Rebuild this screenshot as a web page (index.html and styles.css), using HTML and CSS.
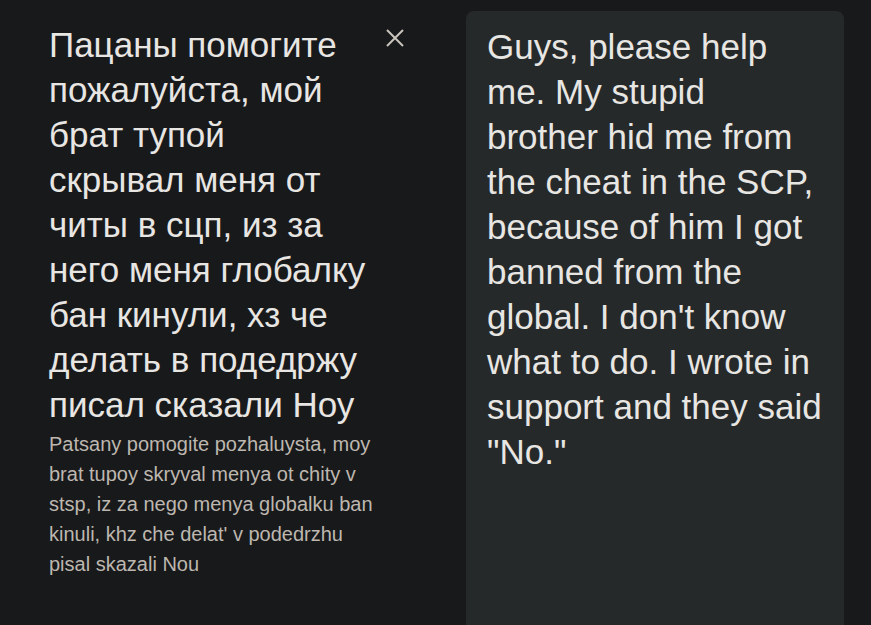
FILE: index.html
```html
<!DOCTYPE html>
<html>
<head>
<meta charset="utf-8">
<link rel="stylesheet" href="styles.css">
</head>
<body>
<div class="page">
  <div class="source">
    <div class="source-text">Пацаны помогите пожалуйста, мой брат тупой скрывал меня от читы в сцп, из за него меня глобалку бан кинули, хз че делать в подедржу писал сказали Ноу</div>
    <div class="translit">Patsany pomogite pozhaluysta, moy brat tupoy skryval menya ot chity v stsp, iz za nego menya globalku ban kinuli, khz che delat' v podedrzhu pisal skazali Nou</div>
  </div>
  <div class="clear">
    <svg width="20" height="20" viewBox="0 0 20 20"><path d="M2 2 L18 18 M18 2 L2 18" stroke="#c9c4bc" stroke-width="2" fill="none"/></svg>
  </div>
  <div class="target">
    <div class="target-text">Guys, please help me. My stupid brother hid me from the cheat in the SCP, because of him I got banned from the global. I don't know what to do. I wrote in support and they said "No."</div>
  </div>
</div>
</body>
</html>
```
FILE: styles.css
```css
html, body {
  margin: 0;
  padding: 0;
  background: #18191b;
  height: 100%;
  overflow: hidden;
}
.page {
  display: flex;
  font-family: "Liberation Sans", Arial, sans-serif;
  height: 100%;
}
.source {
  width: 330px;
  padding: 22px 0 0 49px;
  flex: none;
}
.source-text {
  font-size: 35px;
  line-height: 45px;
  color: #e8e6e3;
  margin-right: 10px;
}
.translit {
  font-size: 20px;
  line-height: 30px;
  color: #bdb7af;
  margin-top: 2px;
}
.clear {
  width: 20px;
  padding: 28px 0 0 0;
  margin-left: 6px;
  flex: none;
}
.clear svg {
  display: block;
}
.target {
  margin: 11px 0 0 61px;
  width: 378px;
  height: 700px;
  background: #25292a;
  border-radius: 8px 8px 0 0;
  padding: 13px 19px 0 21px;
  box-sizing: border-box;
  flex: none;
}
.target-text {
  font-size: 35px;
  line-height: 45px;
  color: #e8e6e3;
}
```
